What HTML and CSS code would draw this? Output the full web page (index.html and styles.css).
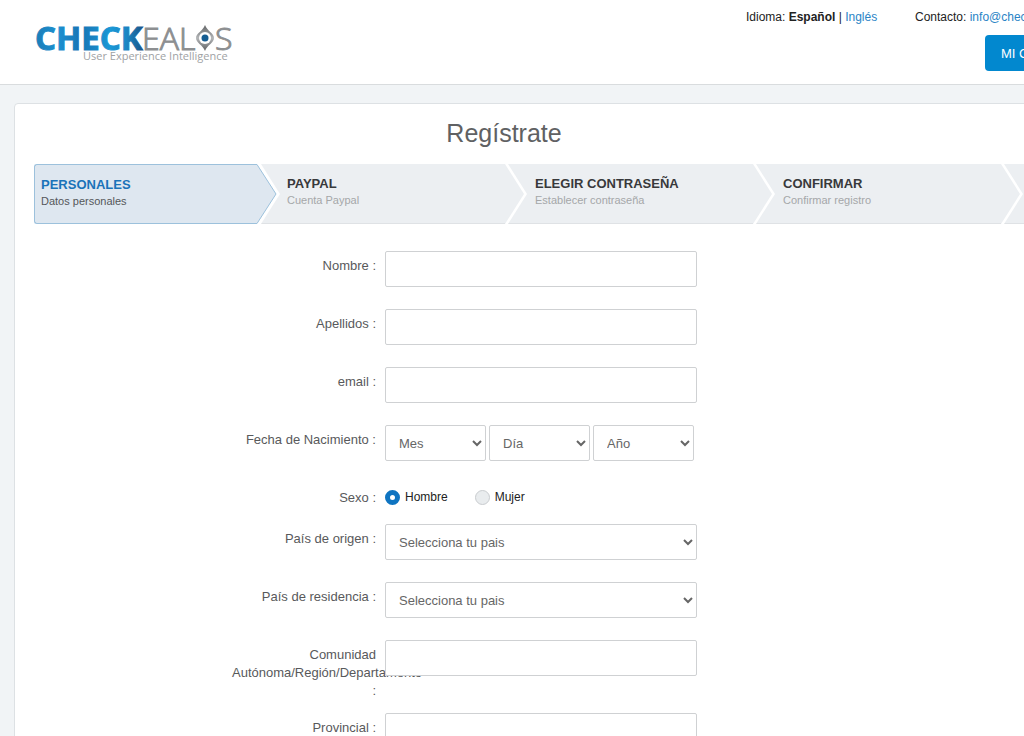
FILE: index.html
```html
<!DOCTYPE html>
<html lang="es">
<head>
  <meta charset="UTF-8">
  <meta name="viewport" content="width=device-width, initial-scale=1.0">
  <title>Checkealos - Regístrate</title>
  <link rel="stylesheet" href="styles.css">
</head>

<body>

<header class="topbar">
  <a class="logo" href="/" aria-label="Checkealos">
    <svg width="200" height="44" viewBox="0 0 200 44">
      <defs>
        <linearGradient id="blue" x1="0" y1="0" x2="1" y2="0">
          <stop offset="0" stop-color="#1b7db8"/>
          <stop offset=".22" stop-color="#1c90d0"/>
          <stop offset=".42" stop-color="#1874b4"/>
          <stop offset=".7" stop-color="#1a98d6"/>
          <stop offset=".85" stop-color="#1a86c4"/>
          <stop offset="1" stop-color="#1b5588"/>
        </linearGradient>
        <linearGradient id="lid" x1="0" y1="0" x2="0" y2="1">
          <stop offset="0" stop-color="#5f6163"/>
          <stop offset=".5" stop-color="#b4b6b8"/>
          <stop offset="1" stop-color="#5f6163"/>
        </linearGradient>
      </defs>
      <text class="logo-bold" x="-1" y="28">CHECK</text>
      <text class="logo-light" x="106" y="28">EAL</text>
      <path d="M169 3C171 9 178 11 178 16C178 21 171 23 169 29C167 23 160 21 160 16C160 11 167 9 169 3Z" fill="url(#lid)"/>
      <circle cx="169" cy="16" r="6" fill="#fff"/>
      <circle cx="169" cy="16" r="3.500" fill="#155d92"/>
      <text class="logo-light" x="179" y="28">S</text>
      <text class="logo-slogan" x="47" y="38">User Experience Intelligence</text>
    </svg>
  </a>

  <div class="top-right">
    <div class="top-links">
      <div class="lang">Idioma: <strong>Español</strong> | <a href="/en">Inglés</a></div>
      <div>Contacto: <a href="mailto:info@checkealos.com">info@checkealos.com</a></div>
    </div>
    <button class="account-btn" type="button">MI CUENTA</button>
  </div>
</header>

<main class="card">
  <h1>Regístrate</h1>

  <ol class="steps">
    <li class="step active">
      <div class="step-title">PERSONALES</div>
      <div class="step-desc">Datos personales</div>
      <svg class="arrow" width="24" height="60" viewBox="0 0 24 60">
        <path class="gap" d="M0 0H4L23 30L4 60H0Z"/>
        <path class="tip" d="M0 .5L19 30L0 59.500"/>
      </svg>
    </li>
    <li class="step">
      <div class="step-title">PAYPAL</div>
      <div class="step-desc">Cuenta Paypal</div>
      <svg class="arrow" width="24" height="60" viewBox="0 0 24 60">
        <path class="gap" d="M0 0H3L22 30L3 60H0Z"/>
        <path class="tip" d="M0 0L19 30L0 60"/>
      </svg>
    </li>
    <li class="step">
      <div class="step-title">ELEGIR CONTRASEÑA</div>
      <div class="step-desc">Establecer contraseña</div>
      <svg class="arrow" width="24" height="60" viewBox="0 0 24 60">
        <path class="gap" d="M0 0H3L22 30L3 60H0Z"/>
        <path class="tip" d="M0 0L19 30L0 60"/>
      </svg>
    </li>
    <li class="step">
      <div class="step-title">CONFIRMAR</div>
      <div class="step-desc">Confirmar registro</div>
      <svg class="arrow" width="24" height="60" viewBox="0 0 24 60">
        <path class="gap" d="M0 0H3L22 30L3 60H0Z"/>
        <path class="tip" d="M0 0L19 30L0 60"/>
      </svg>
    </li>
    <li class="step"></li>
  </ol>

  <form class="form">
    <div class="row">
      <label for="nombre">Nombre :</label>
      <div class="control"><input class="field" type="text" id="nombre"></div>
    </div>
    <div class="row">
      <label for="apellidos">Apellidos :</label>
      <div class="control"><input class="field" type="text" id="apellidos"></div>
    </div>
    <div class="row">
      <label for="email">email :</label>
      <div class="control"><input class="field" type="email" id="email"></div>
    </div>
    <div class="row">
      <label for="mes">Fecha de Nacimiento :</label>
      <div class="control dates">
        <select class="field" id="mes"><option>Mes</option></select>
        <select class="field" id="dia" aria-label="Día"><option>Día</option></select>
        <select class="field" id="anyo" aria-label="Año"><option>Año</option></select>
      </div>
    </div>
    <div class="row" role="radiogroup" aria-labelledby="sexo">
      <div class="label" id="sexo">Sexo :</div>
      <div class="control radios">
        <label class="radio"><input type="radio" name="sexo" checked>Hombre</label>
        <label class="radio"><input type="radio" name="sexo">Mujer</label>
      </div>
    </div>
    <div class="row">
      <label for="origen">País de origen :</label>
      <div class="control"><select class="field" id="origen"><option>Selecciona tu pais</option></select></div>
    </div>
    <div class="row">
      <label for="residencia">País de residencia :</label>
      <div class="control"><select class="field" id="residencia"><option>Selecciona tu pais</option></select></div>
    </div>
    <div class="row">
      <label for="comunidad">Comunidad <span class="nobreak">Autónoma/Región/Departamento</span> :</label>
      <div class="control"><input class="field" type="text" id="comunidad"></div>
    </div>
    <div class="row">
      <label for="provincia">Provincial :</label>
      <div class="control"><input class="field" type="text" id="provincia"></div>
    </div>
  </form>
</main>

</body>
</html>
```
FILE: styles.css
```css
:root{
  --pageMin: 1307px;
  --blue: #0288cf;
  --link: #2a84c6;
  --text: #58595b;
  --border: #cfd1d3;
  --step: #eceff2;
}

*{ box-sizing:border-box; }
body{
  margin:0;
  height:100vh;
  overflow:hidden;
  background:#f1f4f6;
  color:var(--text);
  font-family:"Liberation Sans", Arial, sans-serif;
  font-size:13px;
  line-height:18px;
}
a{ color:var(--link); text-decoration:none; }

/* ================= TOP BAR ================= */
.topbar{
  display:flex;
  min-width:var(--pageMin);
  height:85px;
  padding-left:36px;
  background:#fff;
  border-bottom:1px solid #d9dcde;
}
.logo{ width:710px; padding-top:22px; }
.logo svg{ display:block; overflow:visible; }
.logo-bold{ font:700 33px "Open Sans", sans-serif; fill:url(#blue); stroke:url(#blue); stroke-width:1px; }
.logo-light{ font:300 32px "Open Sans", sans-serif; fill:#8d8f91; stroke:#8d8f91; }
.logo-slogan{ font:400 11px "Open Sans", sans-serif; fill:#a0a2a4; }

.top-right{
  padding-top:8px;
  color:#222;
  font-size:12px;
}
.top-links{ display:flex; white-space:nowrap; }
.lang{ width:169px; }
.account-btn{
  height:36px;
  margin:9px 0 0 239px;
  padding:0 16px;
  border:0;
  border-radius:4px;
  background:var(--blue);
  color:#fff;
  font:13px "Liberation Sans", Arial, sans-serif;
  cursor:pointer;
}

/* ================= CARD ================= */
.card{
  min-width:var(--pageMin);
  margin:18px 14px;
  padding:15px 19px;
  background:#fff;
  border:1px solid #dde1e4;
  border-radius:4px;
}
h1{
  width:940px;
  margin:0 0 17px;
  color:#606163;
  font-size:25px;
  font-weight:400;
  line-height:28px;
  text-align:center;
}

/* ================= STEPS ================= */
.steps{
  display:flex;
  margin:0 0 27px;
  padding:0;
  list-style:none;
}
.step{
  position:relative;
  flex:0 0 248px;
  height:60px;
  padding:11px 0 0 30px;
  background:var(--step);
  border-bottom:1px solid #dfe2e5;
}
.step.active{
  z-index:1;
  flex-basis:223px;
  padding-left:6px;
  background:#dee7f0;
  border:1px solid #9cc1dc;
  border-right:0;
  border-radius:3px 0 0 3px;
}
.step-title{
  color:#38393b;
  font-size:13px;
  font-weight:700;
}
.step-desc{
  color:#a5a7a9;
  font-size:11px;
  line-height:14px;
}
.active .step-title{ color:#1a73b9; }
.active .step-desc{ color:#55575a; }

.arrow{
  position:absolute;
  top:0; left:100%;
  z-index:1;
}
.active .arrow{ top:-1px; }
.gap{ fill:#fff; }
.tip{ fill:var(--step); }
.active .tip{ fill:#dee7f0; stroke:#9cc1dc; }

/* ================= FORM ================= */
.form{ padding-left:198px; }
.row{
  display:grid;
  grid-template-columns:144px 312px;
  column-gap:9px;
  margin-bottom:13px;
}
.row > label, .label{
  padding-top:6px;
  text-align:right;
}
.nobreak{ white-space:nowrap; }
.control{ padding-bottom:9px; }
.field{
  display:block;
  width:100%;
  height:36px;
  padding:0 9px;
  border:1px solid var(--border);
  border-radius:2px;
  background:#fff;
  color:#666;
  font:13px "Liberation Sans", Arial, sans-serif;
}
select.field{ padding-right:0; }
.dates{ display:flex; gap:3px; }
.dates .field{ width:101px; }

.radios{ display:flex; gap:27px; padding-top:5px; padding-bottom:5px; }
.radio{
  display:flex;
  align-items:center;
  gap:5px;
  color:#222;
  font-size:12px;
}
.radio input{
  appearance:none;
  width:15px; height:15px;
  margin:0;
  border:1px solid #c9cccf;
  border-radius:50%;
  background:#e9ecee;
}
.radio input:checked{
  border:5px solid #0f74c1;
  background:#fff;
}
```
